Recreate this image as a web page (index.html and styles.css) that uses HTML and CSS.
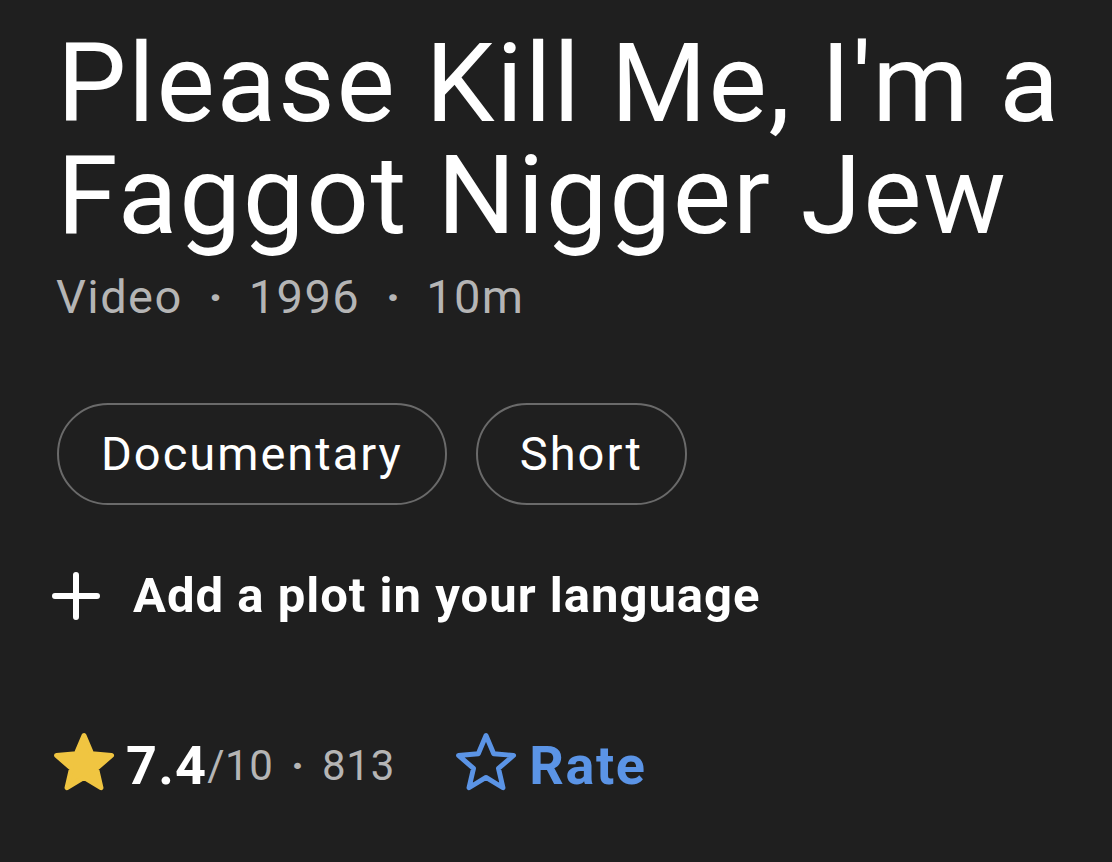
FILE: index.html
```html
<!DOCTYPE html>
<html lang="en">
<head>
<meta charset="utf-8">
<link rel="stylesheet" href="styles.css">
</head>
<body>
<main class="page">
  <h1 class="title">Please Kill Me, I'm a Faggot Nigger Jew</h1>
  <div class="meta">
    <span>Video</span><span class="sep">·</span><span>1996</span><span class="sep">·</span><span>10m</span>
  </div>
  <div class="chips">
    <span class="chip">Documentary</span>
    <span class="chip">Short</span>
  </div>
  <div class="plot">
    <svg class="plus" viewBox="0 0 48 48" width="48" height="48" aria-hidden="true">
      <path d="M24 3v42M3 24h42" stroke="#fff" stroke-width="6" stroke-linecap="round" fill="none"/>
    </svg>
    <span class="plot-text">Add a plot in your language</span>
  </div>
  <div class="rating">
    <div class="score">
      <svg class="star star-filled" viewBox="0 0 24 24" width="66" height="66" aria-hidden="true">
        <path d="M12 17.27L18.18 21l-1.64-7.03L22 9.24l-7.19-.61L12 2 9.19 8.63 2 9.24l5.46 4.73L5.82 21z" fill="#f0c541" stroke="#f0c541" stroke-width="1.8" stroke-linejoin="round"/>
      </svg>
      <span class="value">7.4</span><span class="outof">/10</span><span class="dot">·</span><span class="count">813</span>
    </div>
    <div class="rate">
      <svg class="star" viewBox="0 0 24 24" width="66" height="66" aria-hidden="true">
        <path d="M12 17.27L18.18 21l-1.64-7.03L22 9.24l-7.19-.61L12 2 9.19 8.63 2 9.24l5.46 4.73L5.82 21z" fill="none" stroke="#5b94e6" stroke-width="1.8" stroke-linejoin="round"/>
      </svg>
      <span class="rate-text">Rate</span>
    </div>
  </div>
</main>
</body>
</html>
```

FILE: styles.css
```css
html, body {
  margin: 0;
  padding: 0;
  background: #1f1f1f;
}

body {
  font-family: Roboto, "Liberation Sans", sans-serif;
  color: #ffffff;
  width: 1112px;
  height: 862px;
  overflow: hidden;
}

.page {
  padding: 28px 0 0 52px;
}

.title {
  margin: 0;
  padding-left: 5px;
  font-size: 110px;
  line-height: 112px;
  font-weight: 400;
  letter-spacing: 1.7px;
  width: 1050px;
}

.meta {
  margin-top: 17px;
  display: flex;
  align-items: baseline;
  font-size: 47px;
  line-height: 56px;
  letter-spacing: 1.4px;
  color: #b5b5b5;
  padding-left: 4px;
}

.sep {
  margin: 0 26px;
  letter-spacing: 0;
  font-weight: 700;
}

.chips {
  margin-top: 78px;
  display: flex;
  gap: 29px;
  padding-left: 5px;
}

.chip {
  border: 2px solid #6a6a6a;
  border-radius: 52px;
  font-size: 47px;
  line-height: 98px;
  letter-spacing: 2px;
  padding: 0 42px;
  color: #ffffff;
}

.plot {
  margin-top: 61px;
  display: flex;
  align-items: center;
  gap: 33px;
  height: 60px;
}

.plot-text {
  font-size: 49px;
  font-weight: 700;
  line-height: 60px;
  letter-spacing: 1px;
}

.rating {
  margin-top: 108px;
  display: flex;
  align-items: center;
  gap: 58px;
  height: 64px;
}

.score {
  display: flex;
  align-items: center;
}

.star {
  margin-top: -6px;
  flex: none;
}

.star-filled {
  margin-left: -1px;
  margin-right: 9px;
}

.value {
  font-size: 54px;
  font-weight: 700;
  line-height: 64px;
  letter-spacing: 1.2px;
}

.outof {
  font-size: 42px;
  line-height: 64px;
  letter-spacing: 0.5px;
  color: #b5b5b5;
}

.dot {
  font-size: 42px;
  line-height: 64px;
  font-weight: 700;
  color: #b5b5b5;
  margin: 0 18px;
}

.count {
  font-size: 42px;
  line-height: 64px;
  letter-spacing: 0.8px;
  color: #b5b5b5;
}

.rate {
  display: flex;
  align-items: center;
  gap: 10px;
}

.rate-text {
  font-size: 54px;
  font-weight: 700;
  line-height: 64px;
  letter-spacing: 1.6px;
  color: #5b94e6;
}
```
